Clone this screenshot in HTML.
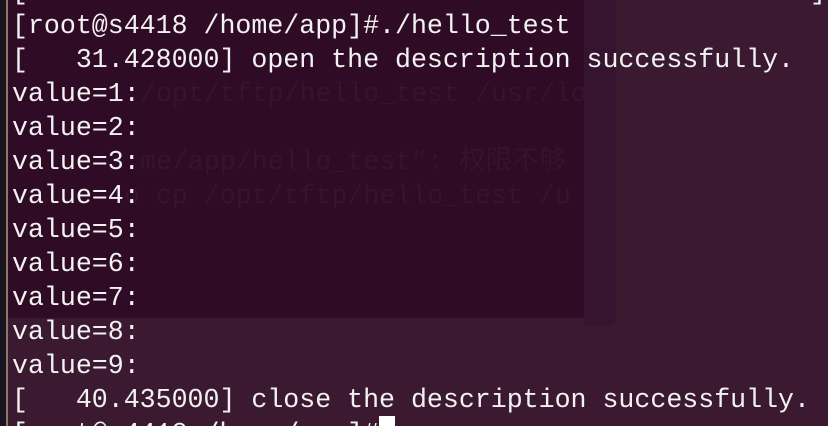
<!DOCTYPE html>
<html><head><meta charset="utf-8"><style>
html,body{margin:0;padding:0;width:828px;height:426px;overflow:hidden;}
body{background:#3b1a31;position:relative;font-family:"Liberation Mono","Noto Sans CJK SC",monospace;}
.wrap{position:absolute;left:0;top:0;width:828px;height:426px;overflow:hidden;}
.inner{position:absolute;left:0;top:0;width:584px;height:318px;background:#300b26;}
.sb{position:absolute;left:584px;top:0;width:32px;height:326px;background:#361430;border-radius:0 0 6px 0;}
.edge{position:absolute;left:0;top:0;width:6px;height:426px;background:#1a1420;}
.edge2{position:absolute;left:6px;top:0;width:2px;height:426px;background:#8a7a60;}
.ghost{position:absolute;left:0;top:0;color:#37132c;font-size:26.6px;line-height:34px;white-space:pre;}
.txt{position:absolute;left:12px;top:-25px;color:#f2f2f2;font-size:26.6px;line-height:34px;white-space:pre;}
.cur{position:absolute;left:379px;top:416px;width:16px;height:10px;background:#fff;}
</style></head><body><div class="wrap">
<div class="inner"></div><div class="sb"></div>
<div class="edge"></div><div class="edge2"></div>
<div class="ghost" style="left:140px;top:77px">/opt/tftp/hello_test /usr/lo</div>
<div class="ghost" style="left:140px;top:145px">me/app/hello_test": 权限不够</div>
<div class="ghost" style="left:124px;top:179px">o cp /opt/tftp/hello_test /u</div>
<div class="txt">[                                                 ]
[root@s4418 /home/app]#./hello_test
[   31.428000] open the description successfully.
value=1:
value=2:
value=3:
value=4:
value=5:
value=6:
value=7:
value=8:
value=9:
[   40.435000] close the description successfully.
[root@s4418 /home/app]#</div>
<div class="cur"></div>
</div></body></html>
